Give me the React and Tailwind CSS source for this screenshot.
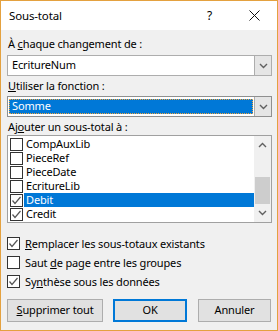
import React from "react";

const font = { fontFamily: '"Noto Sans", "Open Sans", sans-serif' };

function Chevron({ up = false, className = "" }) {
  return (
    <svg width="9" height="6" viewBox="0 0 9 6" className={className}>
      <polyline
        points={up ? "1,5 4.5,1.5 8,5" : "1,1 4.5,4.5 8,1"}
        fill="none"
        stroke="#606060"
        strokeWidth="1.4"
      />
    </svg>
  );
}

function Box({ checked }) {
  return (
    <span className="flex h-[13px] w-[13px] shrink-0 items-center justify-center border border-[#333] bg-white">
      {checked && (
        <svg width="11" height="11" viewBox="0 0 11 11">
          <polyline points="1.5,5.5 4,8.5 9.5,2" fill="none" stroke="#555" strokeWidth="1.2" />
        </svg>
      )}
    </span>
  );
}

function Combo({ value, focused }) {
  return (
    <div
      className={`flex h-[21px] items-stretch border bg-white ${
        focused ? "border-[#8f8f8f]" : "border-[#adadad]"
      }`}
    >
      <div className="flex flex-1 items-center px-[1px]">
        {focused ? (
          <div className="flex h-[15px] w-full items-center border border-dotted border-[#f4a53c] bg-[#0078d7] pl-[2px] text-white">
            {value}
          </div>
        ) : (
          <span className="pl-[3px]">{value}</span>
        )}
      </div>
      <div className="flex w-[17px] items-center justify-center border-l border-[#adadad] bg-[#e5e5e5]">
        <Chevron />
      </div>
    </div>
  );
}

const fields = [
  { name: "CompAuxLib", checked: false },
  { name: "PieceRef", checked: false },
  { name: "PieceDate", checked: false },
  { name: "EcritureLib", checked: false },
  { name: "Debit", checked: true, selected: true },
  { name: "Credit", checked: true },
];

export default function App() {
  return (
    <div
      className="flex h-[331px] w-[278px] flex-col border border-[#e4a13f] bg-[#f0f0f0] text-[11px] tracking-[-0.15px] text-black"
      style={font}
    >
      <div className="flex h-[29px] shrink-0 items-center bg-white">
        <span className="ml-[8px] flex-1 text-[11.5px] leading-[16px]">Sous-total</span>
        <span className="mr-[37px] text-[12px] leading-[16px]">?</span>
        <svg width="11" height="11" viewBox="0 0 11 11" className="mr-[17px]">
          <path d="M0.5 0.5 L10.5 10.5 M10.5 0.5 L0.5 10.5" stroke="#111" strokeWidth="1" />
        </svg>
      </div>

      <div className="flex flex-1 flex-col pl-[6px] pr-[5px]">
        <div className="mt-[6px] h-[16px] pl-[1px] leading-[16px]">
          À <span className="underline">c</span>haque changement de :
        </div>
        <div className="mt-[3px]">
          <Combo value="EcritureNum" />
        </div>
        <div className="mt-[2px] h-[16px] pl-[1px] leading-[16px]">
          <span className="underline">U</span>tiliser la fonction :
        </div>
        <div className="mt-[2px]">
          <Combo value="Somme" focused />
        </div>
        <div className="mt-[2px] h-[16px] pl-[1px] leading-[16px]">
          Aj<span className="underline">o</span>uter un sous-total à :
        </div>

        <div className="flex h-[88px] border border-[#a0a0a0] bg-white">
          <div className="flex flex-1 flex-col overflow-hidden pt-[1px] pl-[2px]">
            {fields.map((f) => (
              <div key={f.name} className="flex h-[14px] items-center">
                <Box checked={f.checked} />
                <span
                  className={`ml-[1px] flex h-[14px] flex-1 items-center pl-[2px] leading-[14px] ${
                    f.selected ? "bg-[#0078d7] text-white" : ""
                  }`}
                >
                  {f.name}
                </span>
              </div>
            ))}
          </div>
          <div className="flex w-[17px] flex-col items-center bg-[#f0f0f0]">
            <div className="flex h-[17px] items-center justify-center">
              <Chevron up />
            </div>
            <div className="mt-[24px] h-[27px] w-[15px] bg-[#cdcdcd]" />
            <div className="flex flex-1 items-center justify-center">
              <Chevron />
            </div>
          </div>
        </div>

        <div className="mt-[11px] flex flex-col">
          {[
            { pre: "", u: "R", post: "emplacer les sous-totaux existants", checked: true },
            { pre: "Saut ", u: "d", post: "e page entre les groupes", checked: false },
            { pre: "Sy", u: "n", post: "thèse sous les données", checked: true },
          ].map((r) => (
            <div key={r.post} className="flex h-[19px] items-center">
              <Box checked={r.checked} />
              <span className="ml-[5px] leading-[16px]">
                {r.pre}
                <span className="underline">{r.u}</span>
                {r.post}
              </span>
            </div>
          ))}
        </div>

        <div className="mt-[8px] flex gap-[10px] pr-[1px]">
          <button className="flex h-[23px] w-[96px] items-center justify-center border border-[#adadad] bg-[#e1e1e1]">
            <span className="underline">S</span>upprimer tout
          </button>
          <button className="flex h-[23px] w-[74px] items-center justify-center border-2 border-[#0078d7] bg-[#e1e1e1]">
            OK
          </button>
          <button className="ml-[1px] flex h-[23px] w-[73px] items-center justify-center border border-[#adadad] bg-[#e1e1e1]">
            Annuler
          </button>
        </div>
      </div>
    </div>
  );
}
